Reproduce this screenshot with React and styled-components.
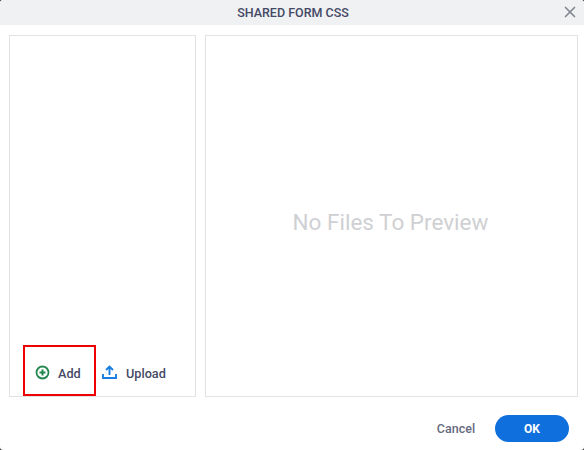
import React from "react"
import styled, { createGlobalStyle } from "styled-components"
import { X } from "lucide-react"

const GlobalStyle = createGlobalStyle`
  html, body {
    margin: 0;
    padding: 0;
    background: #333;
  }
  body {
    font-family: Roboto, "Liberation Sans", sans-serif;
  }
`

const Dialog = styled.div`
  width: 584px;
  height: 450px;
  background: #fff;
  border-radius: 3px;
  display: grid;
  grid-template-rows: 25px 1fr 53px;
  overflow: hidden;
`

const Header = styled.header`
  position: relative;
  background: #f0f1f3;
  display: flex;
  align-items: center;
  justify-content: center;
  padding-left: 2px;
`

const Title = styled.h1`
  margin: 0;
  font-size: 12.5px;
  font-weight: 500;
  color: #444966;
`

const CloseButton = styled.button`
  position: absolute;
  right: 5px;
  top: 3px;
  padding: 0;
  border: 0;
  background: none;
  display: flex;
  color: #83868f;
`

const Body = styled.main`
  display: grid;
  grid-template-columns: 187px 373px;
  column-gap: 9px;
  padding: 10px 6px 0 9px;
`

const Panel = styled.section`
  border: 1px solid #e2e2e4;
  box-sizing: border-box;
  height: 362px;
`

const FilesPanel = styled(Panel)`
  display: flex;
  align-items: flex-end;
  padding-left: 13px;
`

const PreviewPanel = styled(Panel)`
  display: flex;
  align-items: center;
  justify-content: center;
  padding: 12px 2px 0 0;
`

const Placeholder = styled.p`
  margin: 0;
  font-size: 22.5px;
  color: #cfd0d3;
`

const ActionButton = styled.button`
  height: 51px;
  box-sizing: border-box;
  padding: 5px 0 0 ${({ $highlighted }) => ($highlighted ? "10px" : "6px")};
  width: ${({ $highlighted }) => ($highlighted ? "73px" : "auto")};
  border: ${({ $highlighted }) => ($highlighted ? "2px solid #ee0000" : "0")};
  background: none;
  display: flex;
  align-items: center;
  gap: ${({ $highlighted }) => ($highlighted ? "8px" : "9px")};
  font: 500 12.7px Roboto, "Liberation Sans", sans-serif;
  color: #444966;
`

const Footer = styled.footer`
  display: flex;
  align-items: flex-start;
  justify-content: flex-end;
  gap: 19px;
  padding: 18px 15px 0 0;
`

const CancelButton = styled.button`
  height: 27px;
  width: 40px;
  padding: 0;
  border: 0;
  background: none;
  font: 500 12.5px Roboto, "Liberation Sans", sans-serif;
  color: #666b80;
`

const OkButton = styled.button`
  width: 74px;
  height: 27px;
  padding: 0;
  border: 0;
  border-radius: 14px;
  background: #0f6fdc;
  font: 700 12px Roboto, "Liberation Sans", sans-serif;
  color: #fff;
`

const ActionIcon = styled.svg`
  width: 15px;
  height: 15px;
  margin-bottom: 2px;
  fill: none;
`

const AddIcon = () => (
  <ActionIcon viewBox="0 0 15 15" stroke="#23884f">
    <circle cx="7.5" cy="7.5" r="6" strokeWidth="1.8" />
    <path d="M7.5 4.5v6M4.5 7.5h6" strokeWidth="2" />
  </ActionIcon>
)

const UploadIcon = () => (
  <ActionIcon viewBox="0 0 15 15" stroke="#1a7fe0" strokeWidth="1.9">
    <path d="M7.5 10V1.8M4 5l3.5-3.4L11 5" />
    <path d="M1 9v4h13V9" />
  </ActionIcon>
)

const App = () => {
  return (
    <>
      <GlobalStyle />
      <Dialog>
        <Header>
          <Title>SHARED FORM CSS</Title>
          <CloseButton aria-label="Close">
            <X size={18} strokeWidth={2.2} />
          </CloseButton>
        </Header>
        <Body>
          <FilesPanel>
            <ActionButton $highlighted>
              <AddIcon />
              Add
            </ActionButton>
            <ActionButton>
              <UploadIcon />
              Upload
            </ActionButton>
          </FilesPanel>
          <PreviewPanel>
            <Placeholder>No Files To Preview</Placeholder>
          </PreviewPanel>
        </Body>
        <Footer>
          <CancelButton>Cancel</CancelButton>
          <OkButton>OK</OkButton>
        </Footer>
      </Dialog>
    </>
  )
}

export default App
